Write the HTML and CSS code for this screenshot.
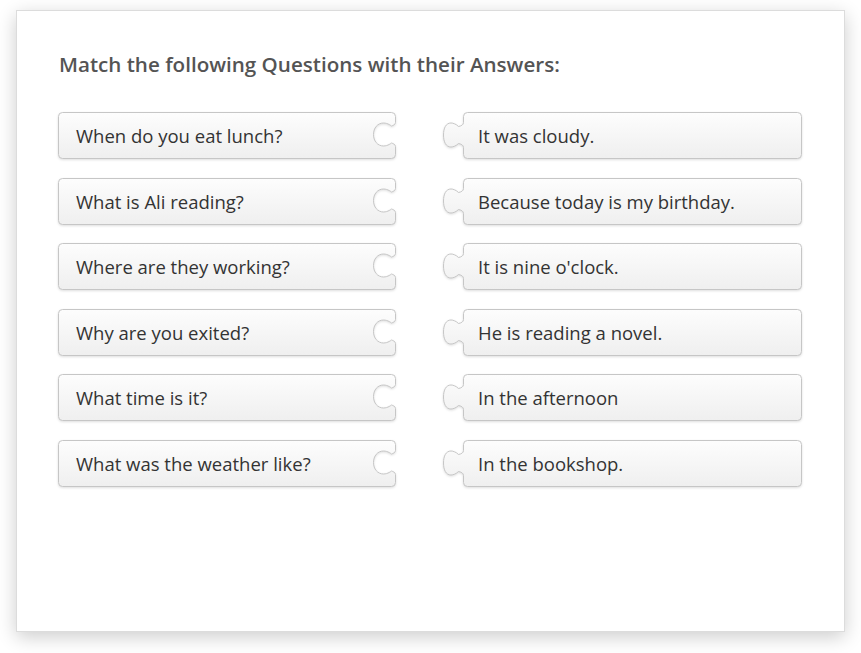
FILE: index.html
```html
<!DOCTYPE html>
<html>
<head>
<meta charset="utf-8">
<link rel="stylesheet" href="styles.css">
</head>
<body>
<svg class="defs" width="0" height="0">
  <defs>
    <linearGradient id="pg" x1="0" y1="0" x2="0" y2="1">
      <stop offset="0" stop-color="#fdfdfd"/>
      <stop offset="1" stop-color="#efefef"/>
    </linearGradient>
  </defs>
</svg>
<div class="card">
  <h1 class="title">Match the following Questions with their Answers:</h1>
  <div class="board">
    <div class="col">
      <div class="piece q"><svg class="shape" width="340" height="48" viewBox="0 0 340 48"><path d="M4.5,0.5 H333.5 Q337.5,0.5 337.5,4.5 V10.5 C337.5,12.5 335,13.5 333.5,14 C333.5,14 330,11 325.5,11 C319.5,11 315.5,16 315.5,22.5 C315.5,29 319.5,34 325.5,34 C330,34 333.5,31 333.5,31 C335,31.5 337.5,32.5 337.5,34.5 V42.5 Q337.5,46.5 333.5,46.5 H4.5 Q0.5,46.5 0.5,42.5 V4.5 Q0.5,0.5 4.5,0.5 Z"/></svg><span>When do you eat lunch?</span></div>
      <div class="piece q"><svg class="shape" width="340" height="48" viewBox="0 0 340 48"><path d="M4.5,0.5 H333.5 Q337.5,0.5 337.5,4.5 V10.5 C337.5,12.5 335,13.5 333.5,14 C333.5,14 330,11 325.5,11 C319.5,11 315.5,16 315.5,22.5 C315.5,29 319.5,34 325.5,34 C330,34 333.5,31 333.5,31 C335,31.5 337.5,32.5 337.5,34.5 V42.5 Q337.5,46.5 333.5,46.5 H4.5 Q0.5,46.5 0.5,42.5 V4.5 Q0.5,0.5 4.5,0.5 Z"/></svg><span>What is Ali reading?</span></div>
      <div class="piece q"><svg class="shape" width="340" height="48" viewBox="0 0 340 48"><path d="M4.5,0.5 H333.5 Q337.5,0.5 337.5,4.5 V10.5 C337.5,12.5 335,13.5 333.5,14 C333.5,14 330,11 325.5,11 C319.5,11 315.5,16 315.5,22.5 C315.5,29 319.5,34 325.5,34 C330,34 333.5,31 333.5,31 C335,31.5 337.5,32.5 337.5,34.5 V42.5 Q337.5,46.5 333.5,46.5 H4.5 Q0.5,46.5 0.5,42.5 V4.5 Q0.5,0.5 4.5,0.5 Z"/></svg><span>Where are they working?</span></div>
      <div class="piece q"><svg class="shape" width="340" height="48" viewBox="0 0 340 48"><path d="M4.5,0.5 H333.5 Q337.5,0.5 337.5,4.5 V10.5 C337.5,12.5 335,13.5 333.5,14 C333.5,14 330,11 325.5,11 C319.5,11 315.5,16 315.5,22.5 C315.5,29 319.5,34 325.5,34 C330,34 333.5,31 333.5,31 C335,31.5 337.5,32.5 337.5,34.5 V42.5 Q337.5,46.5 333.5,46.5 H4.5 Q0.5,46.5 0.5,42.5 V4.5 Q0.5,0.5 4.5,0.5 Z"/></svg><span>Why are you exited?</span></div>
      <div class="piece q"><svg class="shape" width="340" height="48" viewBox="0 0 340 48"><path d="M4.5,0.5 H333.5 Q337.5,0.5 337.5,4.5 V10.5 C337.5,12.5 335,13.5 333.5,14 C333.5,14 330,11 325.5,11 C319.5,11 315.5,16 315.5,22.5 C315.5,29 319.5,34 325.5,34 C330,34 333.5,31 333.5,31 C335,31.5 337.5,32.5 337.5,34.5 V42.5 Q337.5,46.5 333.5,46.5 H4.5 Q0.5,46.5 0.5,42.5 V4.5 Q0.5,0.5 4.5,0.5 Z"/></svg><span>What time is it?</span></div>
      <div class="piece q"><svg class="shape" width="340" height="48" viewBox="0 0 340 48"><path d="M4.5,0.5 H333.5 Q337.5,0.5 337.5,4.5 V10.5 C337.5,12.5 335,13.5 333.5,14 C333.5,14 330,11 325.5,11 C319.5,11 315.5,16 315.5,22.5 C315.5,29 319.5,34 325.5,34 C330,34 333.5,31 333.5,31 C335,31.5 337.5,32.5 337.5,34.5 V42.5 Q337.5,46.5 333.5,46.5 H4.5 Q0.5,46.5 0.5,42.5 V4.5 Q0.5,0.5 4.5,0.5 Z"/></svg><span>What was the weather like?</span></div>
    </div>
    <div class="col">
      <div class="piece a"><svg class="shape" width="360" height="48" viewBox="0 0 360 48"><path d="M24.5,0.5 H354.5 Q358.5,0.5 358.5,4.5 V42.5 Q358.5,46.5 354.5,46.5 H24.5 Q20.5,46.5 20.5,42.5 V35.5 C20.5,33 18,32 15.5,31.5 C13,34 10,35 8,35 C3,35 0.5,30 0.5,23 C0.5,16 3,11 8,11 C10,11 13,12 15.5,14.5 C18,14 20.5,13 20.5,10.5 V4.5 Q20.5,0.5 24.5,0.5 Z"/></svg><span>It was cloudy.</span></div>
      <div class="piece a"><svg class="shape" width="360" height="48" viewBox="0 0 360 48"><path d="M24.5,0.5 H354.5 Q358.5,0.5 358.5,4.5 V42.5 Q358.5,46.5 354.5,46.5 H24.5 Q20.5,46.5 20.5,42.5 V35.5 C20.5,33 18,32 15.5,31.5 C13,34 10,35 8,35 C3,35 0.5,30 0.5,23 C0.5,16 3,11 8,11 C10,11 13,12 15.5,14.5 C18,14 20.5,13 20.5,10.5 V4.5 Q20.5,0.5 24.5,0.5 Z"/></svg><span>Because today is my birthday.</span></div>
      <div class="piece a"><svg class="shape" width="360" height="48" viewBox="0 0 360 48"><path d="M24.5,0.5 H354.5 Q358.5,0.5 358.5,4.5 V42.5 Q358.5,46.5 354.5,46.5 H24.5 Q20.5,46.5 20.5,42.5 V35.5 C20.5,33 18,32 15.5,31.5 C13,34 10,35 8,35 C3,35 0.5,30 0.5,23 C0.5,16 3,11 8,11 C10,11 13,12 15.5,14.5 C18,14 20.5,13 20.5,10.5 V4.5 Q20.5,0.5 24.5,0.5 Z"/></svg><span>It is nine o'clock.</span></div>
      <div class="piece a"><svg class="shape" width="360" height="48" viewBox="0 0 360 48"><path d="M24.5,0.5 H354.5 Q358.5,0.5 358.5,4.5 V42.5 Q358.5,46.5 354.5,46.5 H24.5 Q20.5,46.5 20.5,42.5 V35.5 C20.5,33 18,32 15.5,31.5 C13,34 10,35 8,35 C3,35 0.5,30 0.5,23 C0.5,16 3,11 8,11 C10,11 13,12 15.5,14.5 C18,14 20.5,13 20.5,10.5 V4.5 Q20.5,0.5 24.5,0.5 Z"/></svg><span>He is reading a novel.</span></div>
      <div class="piece a"><svg class="shape" width="360" height="48" viewBox="0 0 360 48"><path d="M24.5,0.5 H354.5 Q358.5,0.5 358.5,4.5 V42.5 Q358.5,46.5 354.5,46.5 H24.5 Q20.5,46.5 20.5,42.5 V35.5 C20.5,33 18,32 15.5,31.5 C13,34 10,35 8,35 C3,35 0.5,30 0.5,23 C0.5,16 3,11 8,11 C10,11 13,12 15.5,14.5 C18,14 20.5,13 20.5,10.5 V4.5 Q20.5,0.5 24.5,0.5 Z"/></svg><span>In the afternoon</span></div>
      <div class="piece a"><svg class="shape" width="360" height="48" viewBox="0 0 360 48"><path d="M24.5,0.5 H354.5 Q358.5,0.5 358.5,4.5 V42.5 Q358.5,46.5 354.5,46.5 H24.5 Q20.5,46.5 20.5,42.5 V35.5 C20.5,33 18,32 15.5,31.5 C13,34 10,35 8,35 C3,35 0.5,30 0.5,23 C0.5,16 3,11 8,11 C10,11 13,12 15.5,14.5 C18,14 20.5,13 20.5,10.5 V4.5 Q20.5,0.5 24.5,0.5 Z"/></svg><span>In the bookshop.</span></div>
    </div>
  </div>
</div>
</body>
</html>
```

FILE: styles.css
```css
html, body {
  margin: 0;
  padding: 0;
  background: #ffffff;
}
body {
  padding: 10px 0 0 16px;
  height: 653px;
  box-sizing: border-box;
  font-family: "Open Sans", "Liberation Sans", sans-serif;
}
.defs {
  position: absolute;
  width: 0;
  height: 0;
}
.card {
  box-sizing: border-box;
  width: 829px;
  height: 622px;
  border: 1px solid #dcdcdc;
  background: #ffffff;
  box-shadow: 0 5px 18px rgba(0, 0, 0, 0.2);
  padding: 39px 0 0 41px;
}
.title {
  margin: 0 0 0 1px;
  font-size: 20.6px;
  line-height: 28px;
  font-weight: 600;
  color: #545454;
}
.board {
  display: flex;
  gap: 45px;
  margin-top: 34px;
}
.col {
  display: flex;
  flex-direction: column;
  gap: 18.6px;
}
.piece {
  position: relative;
  height: 47px;
  display: flex;
  align-items: center;
  box-sizing: border-box;
  font-size: 18.5px;
  color: #333333;
}
.piece.q {
  width: 340px;
  padding-left: 18px;
}
.piece.a {
  width: 360px;
  padding-left: 35px;
}
.piece span {
  position: relative;
}
.shape {
  position: absolute;
  left: 0;
  top: 0;
  filter: drop-shadow(0 1px 1px rgba(0, 0, 0, 0.13));
}
.shape path {
  fill: url(#pg);
  stroke: #c6c6c6;
  stroke-width: 1;
}
```
